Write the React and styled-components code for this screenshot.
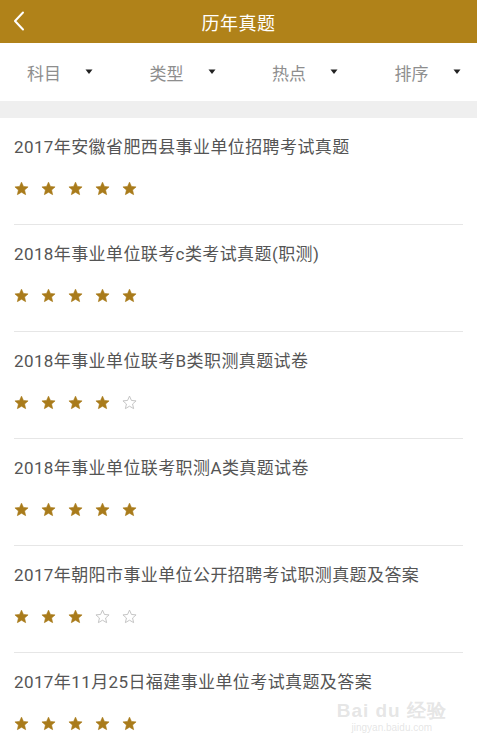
import React from "react";
import styled, { createGlobalStyle } from "styled-components";

const Global = createGlobalStyle`
  html, body { margin: 0; padding: 0; background: #fff; }
  body { font-family: Roboto, "Noto Sans CJK SC", "Noto Sans", sans-serif; }
`;

const Page = styled.div`
  width: 477px;
  height: 743px;
  position: relative;
  overflow: hidden;
  background: #fff;
`;

const Header = styled.header`
  height: 43px;
  background: #b08219;
  display: flex;
  align-items: center;
  justify-content: center;
  position: relative;
`;

const BackBtn = styled.div`
  position: absolute;
  left: 12px;
  top: 10px;
  width: 20px;
  height: 22px;
  display: flex;
  align-items: center;
`;

const Title = styled.h1`
  margin: 0;
  color: #fff;
  font-size: 18px;
  font-weight: 400;
  letter-spacing: 0.5px;
`;

const FilterBar = styled.div`
  height: 58px;
  display: flex;
  align-items: center;
  padding-left: 27px;
  overflow: hidden;
`;

const FilterItem = styled.div`
  flex: 0 0 122.5px;
  display: flex;
  align-items: center;
`;

const FilterLabel = styled.span`
  font-size: 17px;
  color: #8e8e8e;
  width: 57px;
`;

const Gap = styled.div`
  height: 17px;
  background: #efefef;
`;

const List = styled.div`
  padding: 0 14px;
`;

const Item = styled.div`
  height: 107px;
  border-bottom: 1px solid #e6e6e6;
  display: flex;
  flex-direction: column;
  padding-top: 16px;
  box-sizing: border-box;
`;

const ItemTitle = styled.div`
  font-size: 17px;
  color: #555;
  line-height: 26px;
  height: 26px;
  white-space: nowrap;
  letter-spacing: 0.4px;
`;

const Stars = styled.div`
  display: flex;
  gap: 12px;
  margin-top: 21px;
`;

const Watermark = styled.div`
  position: absolute;
  right: 30px;
  bottom: 9px;
  color: rgba(190, 190, 190, 0.4);
  font-family: "Liberation Sans", sans-serif;
  text-align: center;
  pointer-events: none;
`;

const WmTop = styled.div`
  font-size: 19px;
  font-weight: 700;
  letter-spacing: 1px;
  line-height: 22px;
`;

const WmBottom = styled.div`
  font-size: 10px;
  line-height: 12px;
`;

const Star = ({ filled }) => (
  <svg width="15" height="15" viewBox="0 0 24 24">
    <path
      d="M12 1.8l3.1 6.9 7.4.7-5.6 5 1.7 7.4L12 17.9l-6.6 3.9 1.7-7.4-5.6-5 7.4-.7z"
      fill={filled ? "#a97b1b" : "none"}
      stroke={filled ? "#a97b1b" : "#bdbdbd"}
      strokeWidth={filled ? 1 : 1.4}
      strokeLinejoin="round"
    />
  </svg>
);

const Caret = () => (
  <svg width="10" height="6" viewBox="0 0 10 6">
    <path d="M1.5 0.5h7L5 5z" fill="#222" />
  </svg>
);

const filters = ["科目", "类型", "热点", "排序"];

const items = [
  { t: "2017年安徽省肥西县事业单位招聘考试真题", s: 5 },
  { t: "2018年事业单位联考c类考试真题(职测)", s: 5 },
  { t: "2018年事业单位联考B类职测真题试卷", s: 4 },
  { t: "2018年事业单位联考职测A类真题试卷", s: 5 },
  { t: "2017年朝阳市事业单位公开招聘考试职测真题及答案", s: 3 },
  { t: "2017年11月25日福建事业单位考试真题及答案", s: 5 },
];

export default function App() {
  return (
    <Page>
      <Global />
      <Header>
        <BackBtn>
          <svg width="14" height="20" viewBox="0 0 14 20">
            <path d="M11 1.5L3 10l8 8.5" fill="none" stroke="#fff" strokeWidth="2" strokeLinecap="round" strokeLinejoin="round" />
          </svg>
        </BackBtn>
        <Title>历年真题</Title>
      </Header>
      <FilterBar>
        {filters.map((f) => (
          <FilterItem key={f}>
            <FilterLabel>{f}</FilterLabel>
            <Caret />
          </FilterItem>
        ))}
      </FilterBar>
      <Gap />
      <List>
        {items.map((it, i) => (
          <Item key={i}>
            <ItemTitle>{it.t}</ItemTitle>
            <Stars>
              {[0, 1, 2, 3, 4].map((k) => (
                <Star key={k} filled={k < it.s} />
              ))}
            </Stars>
          </Item>
        ))}
      </List>
      <Watermark>
        <WmTop>Bai du 经验</WmTop>
        <WmBottom>jingyan.baidu.com</WmBottom>
      </Watermark>
    </Page>
  );
}
